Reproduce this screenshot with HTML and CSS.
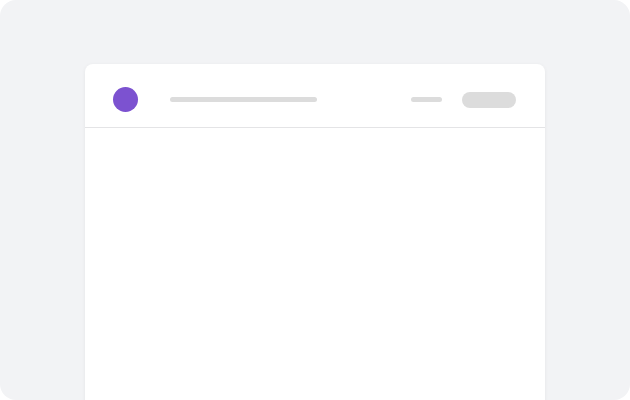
FILE: index.html
```html
<!DOCTYPE html>
<html>
<head>
<meta charset="utf-8">
<link rel="stylesheet" href="styles.css">
</head>
<body>
<div class="frame">
  <div class="card">
    <div class="header">
      <div class="avatar"></div>
      <div class="title-bar"></div>
      <div class="spacer"></div>
      <div class="link-bar"></div>
      <div class="pill"></div>
    </div>
    <div class="body"></div>
  </div>
</div>
</body>
</html>
```
FILE: styles.css
```css
html, body {
  margin: 0;
  padding: 0;
  background: #ffffff;
  font-family: "Inter", "Liberation Sans", sans-serif;
}
.frame {
  width: 630px;
  height: 400px;
  box-sizing: border-box;
  background: #f2f3f5;
  border-radius: 16px;
  overflow: hidden;
  padding: 64px 0 0 85px;
}
.card {
  width: 460px;
  height: 400px;
  background: #ffffff;
  border-radius: 8px;
  box-shadow: 0 1px 4px rgba(0, 0, 0, 0.06);
}
.header {
  display: flex;
  align-items: center;
  padding: 23px 29px 15px 28px;
  border-bottom: 1px solid #e4e4e6;
}
.avatar {
  width: 25px;
  height: 25px;
  border-radius: 50%;
  background: #7c52d0;
  flex: none;
}
.title-bar {
  width: 147px;
  height: 5px;
  border-radius: 3px;
  background: #dcdcdc;
  margin-left: 32px;
}
.spacer {
  flex: 1;
}
.link-bar {
  width: 31px;
  height: 5px;
  border-radius: 3px;
  background: #dcdcdc;
}
.pill {
  width: 54px;
  height: 16px;
  border-radius: 8px;
  background: #dcdcdc;
  margin-left: 20px;
}
```
